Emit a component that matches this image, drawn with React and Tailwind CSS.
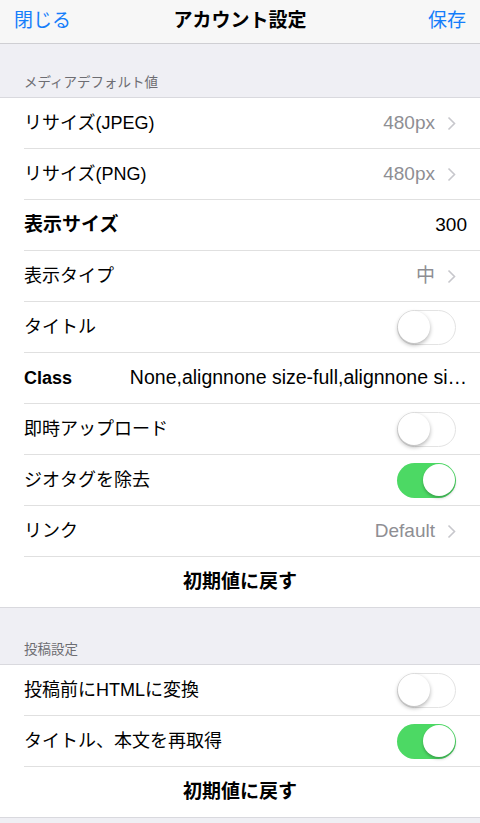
import React from "react";

const FONT = { fontFamily: '"Liberation Sans", "Noto Sans CJK JP", sans-serif' };

function Chevron() {
  return (
    <svg width="9" height="15" viewBox="0 0 9 15" className="ml-[12px]">
      <polyline points="1.5,1.5 7.5,7.5 1.5,13.5" fill="none" stroke="#c7c7cc" strokeWidth="1.6" />
    </svg>
  );
}

function Toggle({ on }) {
  return on ? (
    <div className="relative w-[59px] h-[35px] rounded-full bg-[#4cd964] shrink-0">
      <div className="absolute right-[1.5px] top-[1.5px] w-[32px] h-[32px] rounded-full bg-white shadow-[0_2px_3px_rgba(0,0,0,0.25)]" />
    </div>
  ) : (
    <div className="relative w-[59px] h-[35px] rounded-full bg-white border-[1.5px] border-[#e3e3e3] shrink-0">
      <div className="absolute left-0 top-0 w-[32px] h-[32px] rounded-full bg-white shadow-[0_2px_4px_rgba(0,0,0,0.3)]" />
    </div>
  );
}

function Row({ children, last }) {
  return (
    <div className="pl-6">
      <div className={"h-[51px] flex items-center pr-[24px] " + (last ? "" : "border-b border-[#e0e0e0]")}>{children}</div>
    </div>
  );
}

function NavRow({ label, value }) {
  return (
    <Row>
      <span className="text-[18px] text-black flex-1">{label}</span>
      <span className="text-[19px] text-[#8e8e93]">{value}</span>
      <Chevron />
    </Row>
  );
}

function ToggleRow({ label, on }) {
  return (
    <Row>
      <span className="text-[18px] text-black flex-1">{label}</span>
      <Toggle on={on} />
    </Row>
  );
}

function SectionHeader({ title, h }) {
  return (
    <div className={"flex items-end px-6 pb-[4px] text-[13.5px] text-[#6d6d72] " + h}>{title}</div>
  );
}

function Reset() {
  return (
    <div className="h-[50px] flex items-center justify-center text-[19px] font-bold text-black">初期値に戻す</div>
  );
}

export default function App() {
  return (
    <div style={FONT} className="w-[480px] h-[823px] bg-[#efeff4] overflow-hidden">
      <div className="h-[44px] bg-[#f7f7f7] border-b border-[#cfcfd3] flex items-center justify-between px-[14px] relative">
        <span className="text-[19px] text-[#157efb]">閉じる</span>
        <span className="absolute left-0 right-0 text-center text-[19px] font-bold text-black pointer-events-none">アカウント設定</span>
        <span className="text-[19px] text-[#157efb]">保存</span>
      </div>

      <SectionHeader title="メディアデフォルト値" h="h-[53px]" />
      <div className="bg-white border-t border-b border-[#d9d9de]">
        <NavRow label="リサイズ(JPEG)" value="480px" />
        <NavRow label="リサイズ(PNG)" value="480px" />
        <div className="pl-6">
          <div className="h-[51px] flex items-center pr-[13px] border-b border-[#e0e0e0]">
            <span className="text-[19px] font-bold text-black flex-1">表示サイズ</span>
            <span className="text-[19px] text-black">300</span>
          </div>
        </div>
        <NavRow label="表示タイプ" value="中" />
        <ToggleRow label="タイトル" on={false} />
        <div className="pl-6">
          <div className="h-[51px] flex items-center pr-[13px] border-b border-[#e0e0e0]">
            <span className="text-[18px] font-bold text-black w-[100px] shrink-0">Class</span>
            <span className="text-[19.5px] text-black flex-1 whitespace-nowrap text-right">None,alignnone size-full,alignnone si…</span>
          </div>
        </div>
        <ToggleRow label="即時アップロード" on={false} />
        <ToggleRow label="ジオタグを除去" on={true} />
        <NavRow label="リンク" value="Default" />
        <Reset />
      </div>

      <SectionHeader title="投稿設定" h="h-[56px]" />
      <div className="bg-white border-t border-b border-[#d9d9de]">
        <ToggleRow label="投稿前にHTMLに変換" on={false} />
        <ToggleRow label="タイトル、本文を再取得" on={true} />
        <Reset />
      </div>
    </div>
  );
}
